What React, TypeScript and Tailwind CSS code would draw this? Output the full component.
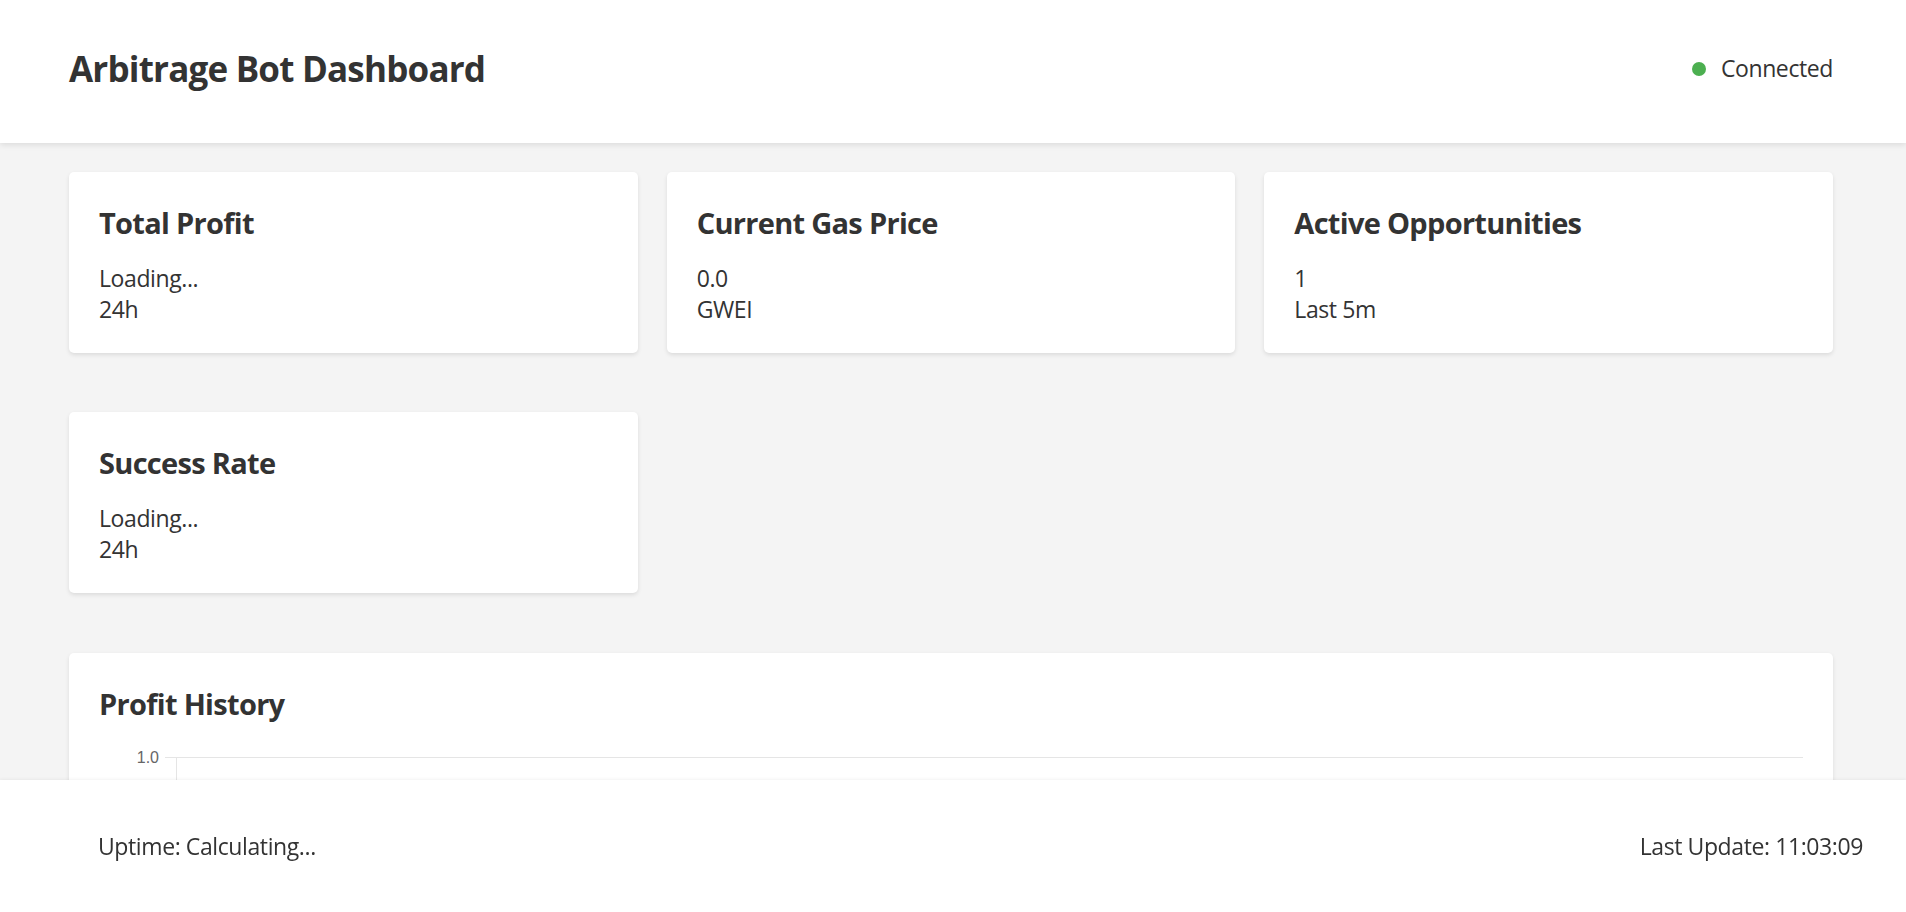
import React from "react";

const font = { fontFamily: '"Open Sans", "Noto Sans", sans-serif' };

type Stat = { title: string; value: string; sub: string };

const stats: Stat[] = [
  { title: "Total Profit", value: "Loading...", sub: "24h" },
  { title: "Current Gas Price", value: "0.0", sub: "GWEI" },
  { title: "Active Opportunities", value: "1", sub: "Last 5m" },
  { title: "Success Rate", value: "Loading...", sub: "24h" },
];

function StatCard({ stat }: { stat: Stat }) {
  return (
    <div className="bg-white rounded-[5px] shadow-[0_2px_4px_rgba(0,0,0,0.1)] pt-[30px] px-[30px] pb-[28px] h-[181px]">
      <h3 className="text-[29px] leading-[41px] font-bold tracking-[-0.7px] text-[#333]">{stat.title}</h3>
      <div className="mt-[20px] text-[23px] leading-[31px] tracking-[-0.4px] text-[#333]">
        <div>{stat.value}</div>
        <div>{stat.sub}</div>
      </div>
    </div>
  );
}

function ProfitChart() {
  // only the top tick is visible, the rest sits under the fixed footer
  const lines = [13.5, 83.5, 153.5, 223.5];
  return (
    <svg width="100%" height="240" className="block">
      {lines.map((y) => (
        <line key={y} x1="66" x2="100%" y1={y} y2={y} stroke="#e5e5e5" strokeWidth="1" />
      ))}
      <text
        x="60"
        y="19"
        textAnchor="end"
        fontSize="16"
        fill="#666"
        fontFamily='"Liberation Sans", Arial, sans-serif'
      >
        1.0
      </text>
      <line x1="77.5" x2="77.5" y1="13" y2="240" stroke="#e5e5e5" strokeWidth="1" />
    </svg>
  );
}

export default function App() {
  return (
    <div className="min-h-screen bg-[#f4f4f4] text-[#333]" style={font}>
      {/* Header */}
      <header className="h-[143px] bg-white shadow-[0_2px_6px_rgba(0,0,0,0.1)] flex items-center justify-between pl-[69px] pr-[73px] relative z-10">
        <h1 className="text-[35px] font-bold tracking-[-0.8px] text-[#333] mb-[5px]">Arbitrage Bot Dashboard</h1>
        <div className="flex items-center gap-[15px] mb-[6px]">
          <span className="w-[14px] h-[14px] rounded-full bg-[#4caf50]"></span>
          <span className="text-[23px] tracking-[-0.4px] text-[#333]">Connected</span>
        </div>
      </header>

      {/* Main */}
      <main className="pt-[29px] pl-[69px] pr-[73px] pb-[140px]">
        <div className="grid grid-cols-3 gap-x-[29px] gap-y-[59px]">
          {stats.map((s) => (
            <StatCard key={s.title} stat={s} />
          ))}
        </div>

        <div className="mt-[60px] bg-white rounded-[5px] shadow-[0_2px_4px_rgba(0,0,0,0.1)] pt-[30px] px-[30px] pb-[30px]">
          <h3 className="text-[29px] leading-[41px] font-bold tracking-[-0.7px] text-[#333]">Profit History</h3>
          <div className="mt-[20px]">
            <ProfitChart />
          </div>
        </div>
      </main>

      {/* Footer */}
      <footer className="fixed bottom-0 left-0 right-0 h-[132px] bg-white shadow-[0_-1px_3px_rgba(0,0,0,0.05)] flex items-center justify-between pl-[98px] pr-[43px] z-20">
        <span className="text-[23px] tracking-[-0.4px] text-[#333]">Uptime: Calculating...</span>
        <span className="text-[23px] tracking-[-0.4px] text-[#333]">Last Update: 11:03:09</span>
      </footer>
    </div>
  );
}
